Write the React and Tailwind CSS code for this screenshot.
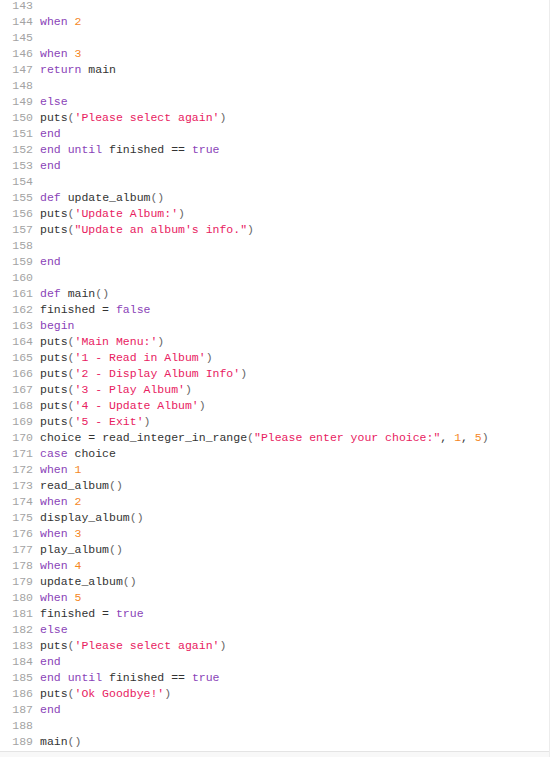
import React from "react";

const LINES = [
  "",
  "when 2",
  "",
  "when 3",
  "return main",
  "",
  "else",
  "puts('Please select again')",
  "end",
  "end until finished == true",
  "end",
  "",
  "def update_album()",
  "puts('Update Album:')",
  "puts(\"Update an album's info.\")",
  "",
  "end",
  "",
  "def main()",
  "finished = false",
  "begin",
  "puts('Main Menu:')",
  "puts('1 - Read in Album')",
  "puts('2 - Display Album Info')",
  "puts('3 - Play Album')",
  "puts('4 - Update Album')",
  "puts('5 - Exit')",
  "choice = read_integer_in_range(\"Please enter your choice:\", 1, 5)",
  "case choice",
  "when 1",
  "read_album()",
  "when 2",
  "display_album()",
  "when 3",
  "play_album()",
  "when 4",
  "update_album()",
  "when 5",
  "finished = true",
  "else",
  "puts('Please select again')",
  "end",
  "end until finished == true",
  "puts('Ok Goodbye!')",
  "end",
  "",
  "main()",
];

const KEYWORDS = ["when", "return", "else", "end", "until", "def", "begin", "case", "true", "false"];

// split a line into coloured pieces
function tokenize(line) {
  const re = /('[^']*'|"[^"]*"|\d+|[A-Za-z_]\w*|[()]|[^A-Za-z_\d'"()]+)/g;
  const out = [];
  let m;
  while ((m = re.exec(line))) {
    const t = m[0];
    let cls = "text-[#333333]";
    if (t[0] === "'" || t[0] === '"') cls = "text-[#e8215f]";
    else if (/^\d+$/.test(t)) cls = "text-[#f5871f]";
    else if (KEYWORDS.includes(t)) cls = "text-[#8a43b8]";
    else if (t === "(" || t === ")") cls = "text-[#666666]";
    out.push({ t, cls });
  }
  return out;
}

export default function App() {
  return (
    <div className="w-[550px] h-[757px] bg-white flex flex-col overflow-hidden border-r border-[#ececec]">
      <div className="flex-1 overflow-hidden">
        <div className="-mt-[2px] font-['Liberation_Mono',monospace] text-[11.5px] leading-[16px] whitespace-pre">
          {LINES.map((line, i) => (
            <div key={i} className="flex h-[16px]">
              <span className="w-[33px] text-right text-[#a3a3a3] shrink-0">{143 + i}</span>
              <span className="pl-[7px]">
                {tokenize(line).map((tok, j) => (
                  <span key={j} className={tok.cls}>{tok.t}</span>
                ))}
              </span>
            </div>
          ))}
        </div>
      </div>
      <div className="h-[6px] bg-[#f8f8f8] border-t border-[#e4e4e4]"></div>
    </div>
  );
}
